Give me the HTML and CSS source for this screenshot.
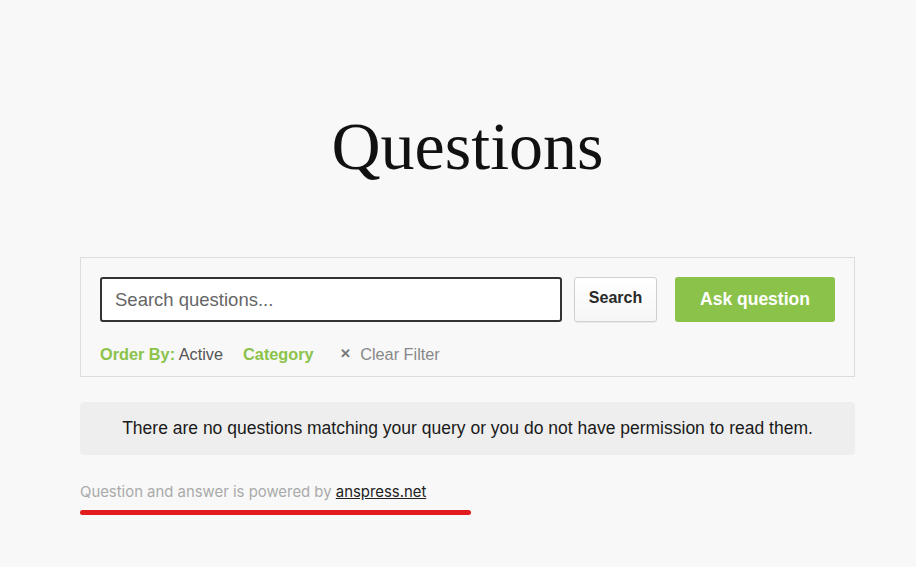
FILE: index.html
```html
<!DOCTYPE html>
<html lang="en">
<head>
<meta charset="utf-8">
<title>Questions</title>
<link rel="stylesheet" href="styles.css">
</head>
<body>
<main class="page">
  <h1 class="title">Questions</h1>
  <section class="filters">
    <div class="search-row">
      <input class="search-input" type="text" placeholder="Search questions...">
      <button class="search-btn">Search</button>
      <a class="ask-btn" href="#">Ask question</a>
    </div>
    <div class="filter-row">
      <span class="filter"><b>Order By:</b> Active</span>
      <span class="filter"><b>Category</b></span>
      <span class="filter clear"><span class="x">✕</span> Clear Filter</span>
    </div>
  </section>
  <div class="notice">There are no questions matching your query or you do not have permission to read them.</div>
  <p class="powered">Question and answer is powered by <a href="#">anspress.net</a></p>
  <div class="redline"></div>
</main>
</body>
</html>
```
FILE: styles.css
```css
html, body {
  margin: 0;
  padding: 0;
  background: #f8f8f8;
}
body {
  font-family: "Liberation Sans", Arial, sans-serif;
  color: #222;
}
.page {
  width: 775px;
  margin-left: 80px;
  padding-top: 96px;
}
.title {
  margin: 0;
  text-align: center;
  font-family: "Liberation Serif", "Times New Roman", serif;
  font-weight: normal;
  font-size: 68px;
  line-height: 100px;
  color: #111;
  height: 100px;
}
.filters {
  margin-top: 61px;
  border: 1px solid #dcdcdc;
  padding: 19px 19px 0 19px;
  height: 99px;
}
.search-row {
  display: flex;
  align-items: stretch;
  height: 45px;
}
.search-input {
  box-sizing: border-box;
  width: 462px;
  height: 45px;
  border: 2px solid #333;
  border-radius: 3px;
  background: #fff;
  padding: 0 13px;
  font-family: "Liberation Sans", Arial, sans-serif;
  font-size: 18.5px;
  color: #333;
  outline: none;
}
.search-input::placeholder {
  color: #666;
}
.search-btn {
  box-sizing: border-box;
  margin-left: 12px;
  width: 83px;
  height: 45px;
  border: 1px solid #cfcfcf;
  border-radius: 3px;
  background: linear-gradient(#fff, #f6f6f6);
  box-shadow: 0 1px 1px rgba(0,0,0,0.06);
  font-family: "Liberation Sans", Arial, sans-serif;
  font-weight: bold;
  font-size: 16px;
  color: #2a2a2a;
  padding: 0;
  padding-bottom: 3px;
}
.ask-btn {
  box-sizing: border-box;
  margin-left: 18px;
  width: 160px;
  height: 45px;
  border-radius: 3px;
  background: #8bc34a;
  color: #fff;
  font-weight: bold;
  font-size: 17.5px;
  text-decoration: none;
  display: flex;
  align-items: center;
  justify-content: center;
}
.filter-row {
  display: flex;
  gap: 20px;
  margin-top: 22px;
  font-size: 16.3px;
  line-height: 20px;
  color: #555;
}
.filter b {
  color: #8bc34a;
}
.filter.clear {
  margin-left: 6px;
  color: #888;
}
.filter .x {
  font-size: 13px;
  font-weight: bold;
  color: #777;
  margin-right: 5px;
  position: relative;
  top: -2px;
}
.notice {
  margin-top: 25px;
  background: #eee;
  border-radius: 4px;
  height: 53px;
  display: flex;
  align-items: center;
  justify-content: center;
  font-size: 17.5px;
  color: #1a1a1a;
}
.powered {
  margin: 27px 0 0 0;
  font-family: Inter, "Liberation Sans", sans-serif;
  font-size: 14.9px;
  line-height: 20px;
  color: #aaa;
}
.powered a {
  color: #222;
  text-decoration: underline;
}
.redline {
  margin-top: 8px;
  width: 391px;
  height: 5px;
  border-radius: 3px;
  background: #e21c1c;
}
```
